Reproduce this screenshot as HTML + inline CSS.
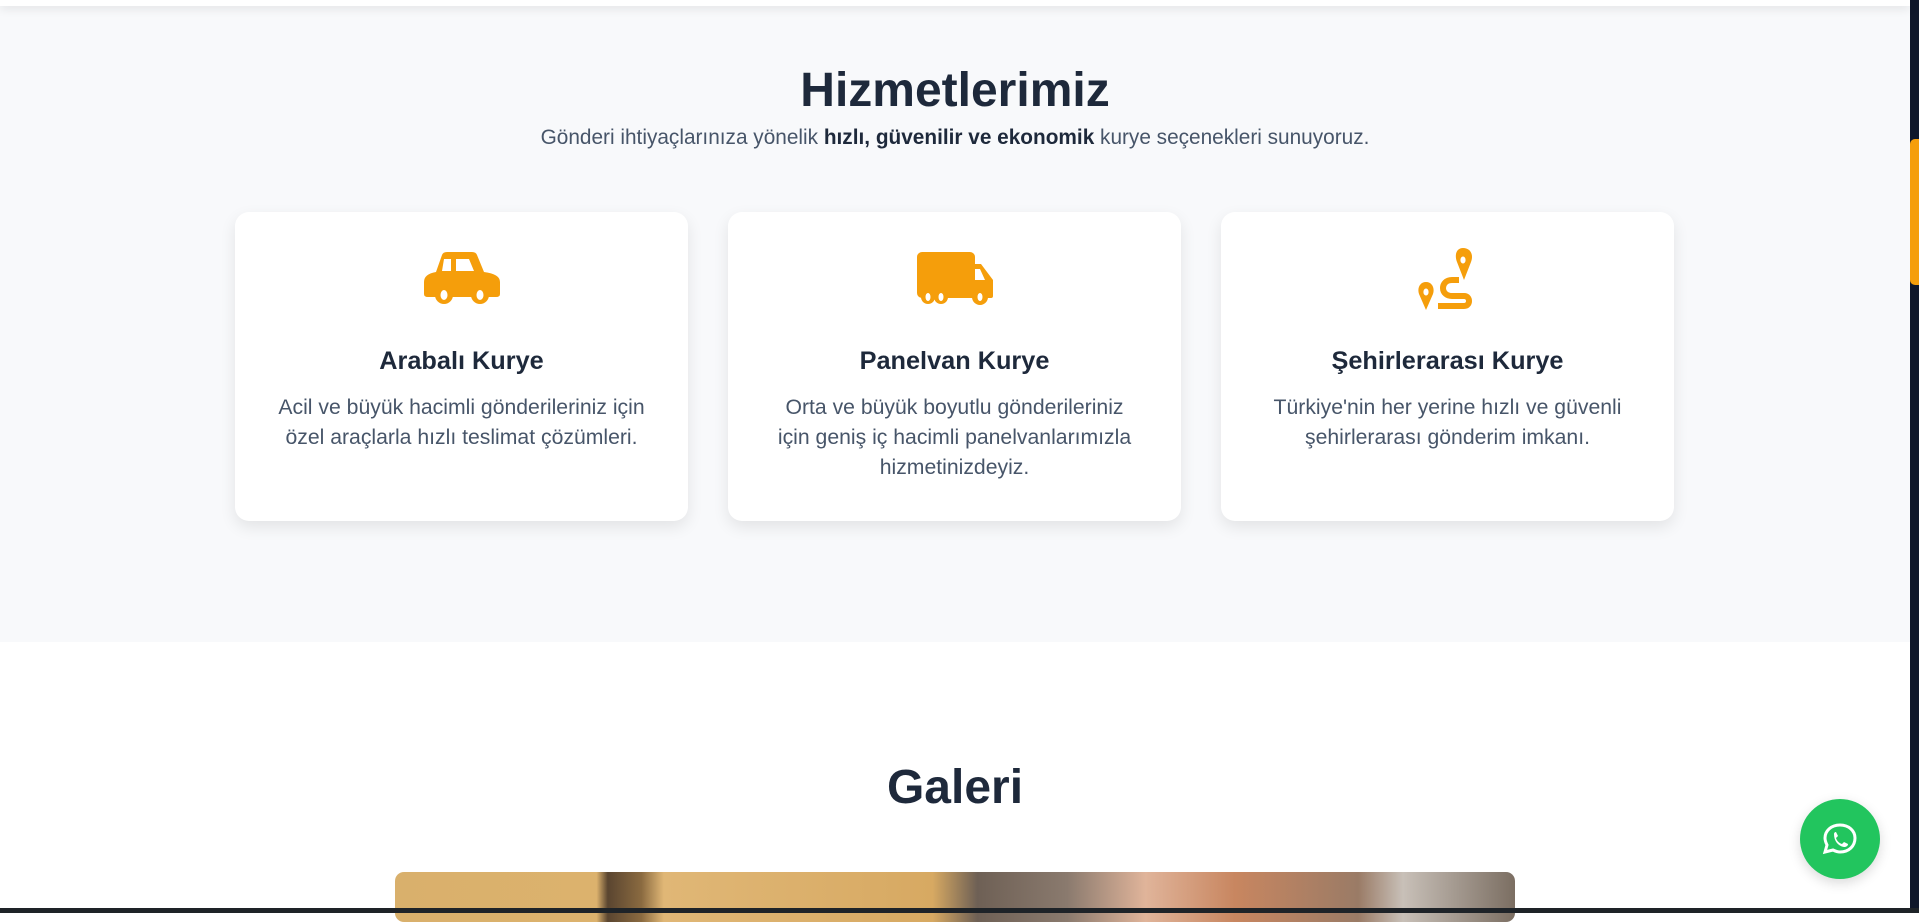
<!DOCTYPE html>
<html><head><meta charset="utf-8"><style>
*{margin:0;padding:0;box-sizing:border-box}
html,body{width:1919px;height:913px;overflow:hidden;font-family:"Liberation Sans",sans-serif;background:#fff}
.topbar{position:absolute;left:0;top:0;width:1910px;height:6px;background:#fff;box-shadow:0 2px 10px rgba(0,0,0,.12);z-index:2}
.sec{position:absolute;left:0;top:0;width:1910px;height:642px;background:#f8f9fb}
h1{position:absolute;left:0;width:1910px;text-align:center;top:63px;font-size:48px;color:#1e293b;font-weight:700}
.sub{position:absolute;left:0;width:1910px;text-align:center;top:126px;font-size:20.8px;color:#475569}
.sub b{color:#1e293b}
.card{position:absolute;top:212px;width:453px;height:309px;background:#fff;border-radius:14px;box-shadow:0 6px 16px rgba(0,0,0,.09);text-align:center}
.card svg{position:absolute;left:50%;transform:translateX(-50%);top:40px}
.card h3{position:absolute;left:0;width:100%;top:135px;font-size:25.3px;color:#1e293b}
.card p{position:absolute;top:181px;left:10px;right:10px;font-size:21.2px;line-height:30px;color:#475569}
h2{position:absolute;left:0;width:1910px;text-align:center;top:760px;font-size:48px;color:#1e293b}
.img{position:absolute;left:395px;top:872px;width:1120px;height:50px;border-radius:9px;overflow:hidden;background:linear-gradient(90deg,#d9b06c 0,#dcb26d 18%,#5a4530 19%,#8a6a40 22%,#e0b776 24%,#d7a962 48%,#6e6055 52%,#8a7a6e 60%,#e0b49a 67%,#c88660 75%,#9a7b66 86%,#c8c0b8 90%,#7b6e62 100%)}
.bot{position:absolute;left:0;top:908px;width:1919px;height:5px;background:#1e2328}
.sb{position:absolute;left:1910px;top:0;width:9px;height:908px;background:#0f172a}
.thumb{position:absolute;left:1910px;top:139px;width:9px;height:146px;background:#f59e0b;border-radius:5px 0 0 5px}
.wa{position:absolute;left:1800px;top:799px;width:80px;height:80px;border-radius:50%;background:#22c55e;box-shadow:0 4px 12px rgba(0,0,0,.15)}
</style></head><body>
<div class="sec"></div>
<div class="topbar"></div>
<h1>Hizmetlerimiz</h1>
<div class="sub">Gönderi ihtiyaçlarınıza yönelik <b>hızlı, güvenilir ve ekonomik</b> kurye seçenekleri sunuyoruz.</div>

<div class="card" style="left:235px">
<svg width="76" height="54" viewBox="0 0 76 54"><path fill="#f59e0b" d="M18 3 Q19 0 23 0 H48 Q52 0 53 3 L60 20 Q76 22 76 30 V42 Q76 45 72 45 H4 Q0 45 0 42 V30 Q0 22 12 20 Z"/><path fill="#fff" d="M20 7 H27 V19 H18 Z M32 7 H45 L50 19 H32 Z"/><circle cx="20" cy="43" r="9" fill="#f59e0b"/><circle cx="56" cy="43" r="9" fill="#f59e0b"/><ellipse cx="20" cy="43" rx="3.5" ry="5" fill="#fff"/><ellipse cx="56" cy="43" rx="3.5" ry="5" fill="#fff"/></svg>
<h3>Arabalı Kurye</h3>
<p>Acil ve büyük hacimli gönderileriniz için<br>özel araçlarla hızlı teslimat çözümleri.</p></div>

<div class="card" style="left:728px">
<svg width="76" height="56" viewBox="0 0 76 56"><rect x="0" y="0" width="58" height="46" rx="5" fill="#f59e0b"/><path fill="#f59e0b" d="M52 12 H64 L76 28 V44 Q76 46 74 46 H52 Z"/><path fill="#fff" d="M58 17 H63 L68 28 H58 Z"/><circle cx="11" cy="45" r="7" fill="#f59e0b"/><circle cx="24" cy="45" r="7" fill="#f59e0b"/><circle cx="63" cy="45" r="8" fill="#f59e0b"/><ellipse cx="11" cy="45" rx="2.5" ry="4" fill="#fff"/><ellipse cx="24" cy="45" rx="2.5" ry="4" fill="#fff"/><ellipse cx="63" cy="45" rx="2.5" ry="4" fill="#fff"/></svg>
<h3>Panelvan Kurye</h3>
<p>Orta ve büyük boyutlu gönderileriniz<br>için geniş iç hacimli panelvanlarımızla<br>hizmetinizdeyiz.</p></div>

<div class="card" style="left:1221px">
<svg width="64" height="64" viewBox="0 0 64 64" style="top:36px"><path fill="#f59e0b" d="M47 0 C54 0 58 6 55 14 L48 32 L41 14 C38 6 41 0 47 0 Z M10 34 C16 34 19 40 17 46 L10 62 L3 46 C1 40 4 34 10 34 Z"/><ellipse cx="47" cy="12" rx="2.6" ry="3.5" fill="#fff"/><ellipse cx="10" cy="44" rx="2.6" ry="3.5" fill="#fff"/><path d="M43 32 H36 C30 32 27 36 27 40 C27 45 31 48 36 48 H48 C52 48 53 51 53 53 C53 55 52 58 48 58 H22" fill="none" stroke="#f59e0b" stroke-width="6"/></svg>
<h3>Şehirlerarası Kurye</h3>
<p>Türkiye'nin her yerine hızlı ve güvenli<br>şehirlerarası gönderim imkanı.</p></div>

<h2>Galeri</h2>
<div class="img"></div>
<div class="bot"></div>
<div class="sb"></div><div class="thumb"></div>
<div class="wa"><svg width="80" height="80" viewBox="0 0 80 80"><path d="M40 26 C31 26 25 32 25 39 C25 42 26 44 27 46 L25 53 L33 51 C35 52 37 53 40 53 C49 53 55 47 55 39 C55 32 49 26 40 26 Z" fill="none" stroke="#fff" stroke-width="3"/><path d="M34 35 C34 33 36 33 36 33 L38 37 L36 39 C37 42 39 44 42 45 L44 43 L48 45 C48 47 46 48 44 48 C38 47 34 42 34 35 Z" fill="#fff"/></svg></div>
</body></html>
